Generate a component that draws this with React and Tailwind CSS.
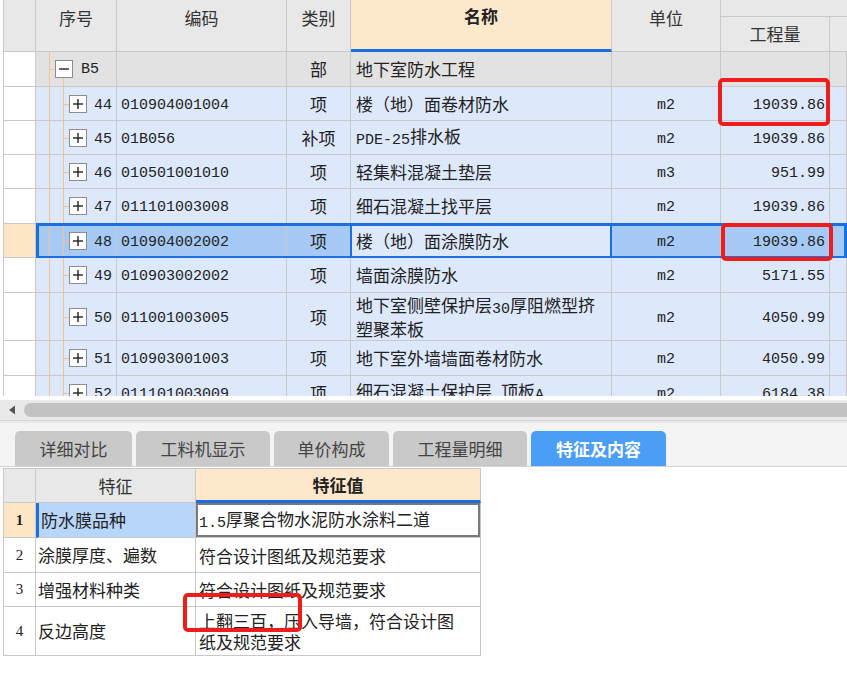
import React from "react";

const CJK = { fontFamily: "'Noto Sans CJK SC', 'Noto Sans', sans-serif" };

function mix(str) {
  const parts = str.match(/[\x20-\x7e]+|[^\x20-\x7e]+/g) || [];
  return parts.map((p, i) =>
    /^[\x20-\x7e]+$/.test(p) ? (
      <span key={i} className="font-['Liberation_Mono',monospace] text-[15px] relative top-[1px]">
        {p}
      </span>
    ) : (
      <span key={i}>{p}</span>
    )
  );
}

function Box({ minus }) {
  return (
    <svg width="18" height="18" viewBox="0 0 18 18" className="block">
      <rect x="0.5" y="0.5" width="17" height="17" fill="#fff" stroke="#8c8c8c" />
      <line x1="4" y1="9" x2="14" y2="9" stroke="#222" strokeWidth="1.4" />
      {!minus && <line x1="9" y1="4" x2="9" y2="14" stroke="#222" strokeWidth="1.4" />}
    </svg>
  );
}

const rows = [
  { n: "44", code: "010904001004", type: "项", name: ["楼（地）面卷材防水"], unit: "m2", qty: "19039.86", h: 34 },
  { n: "45", code: "01B056", type: "补项", name: ["PDE-25排水板"], unit: "m2", qty: "19039.86", h: 34 },
  { n: "46", code: "010501001010", type: "项", name: ["轻集料混凝土垫层"], unit: "m3", qty: "951.99", h: 34 },
  { n: "47", code: "011101003008", type: "项", name: ["细石混凝土找平层"], unit: "m2", qty: "19039.86", h: 35 },
  { n: "48", code: "010904002002", type: "项", name: ["楼（地）面涂膜防水"], unit: "m2", qty: "19039.86", h: 34, sel: true },
  { n: "49", code: "010903002002", type: "项", name: ["墙面涂膜防水"], unit: "m2", qty: "5171.55", h: 35 },
  { n: "50", code: "011001003005", type: "项", name: ["地下室侧壁保护层30厚阻燃型挤", "塑聚苯板"], unit: "m2", qty: "4050.99", h: 48 },
  { n: "51", code: "010903001003", type: "项", name: ["地下室外墙墙面卷材防水"], unit: "m2", qty: "4050.99", h: 35 },
  { n: "52", code: "011101003009", type: "项", name: ["细石混凝土保护层 顶板A"], unit: "m2", qty: "6184.38", h: 35 },
];

const cell = "border-r border-b border-[#c9c9c9] flex items-center";
const mono = "font-['Liberation_Mono',monospace] text-[15px] leading-[18px] relative top-[2px]";

function DataRow({ r }) {
  const bg = r.sel ? "bg-[#a6caf5]" : "bg-[#dde8fb]";
  return (
    <div className="relative flex shrink-0" style={{ height: r.h }}>
      <div className={`${cell} w-[32px] ${r.sel ? "bg-[#fde6c6]" : "bg-white"}`} />
      <div className={`${cell} relative w-[81px] ${bg} justify-end pr-[4px]`}>
        <div className="absolute left-[13px] top-0 bottom-[-1px] w-px bg-[#f2c48c]" />
        <div className="absolute left-[27px] top-0 bottom-[-1px] w-px bg-[#f2c48c]" />
        <div className="absolute left-[27px] top-1/2 w-[6px] h-px bg-[#f2c48c]" />
        <div className="absolute left-[33px] top-1/2 -translate-y-1/2">
          <Box />
        </div>
        <span className={`${mono} text-[#222]`}>{r.n}</span>
      </div>
      <div className={`${cell} w-[170px] ${bg} pl-[4px]`}>
        <span className={`${mono} text-[#222]`}>{r.code}</span>
      </div>
      <div className={`${cell} w-[64px] ${bg} justify-center text-[17px] text-[#222]`}>{r.type}</div>
      <div className={`${cell} relative w-[261px] ${r.sel ? "bg-[#dde8fb]" : bg} pl-[5px] text-[17px] leading-[20px] text-[#222]`}>
        <div>
          {r.name.map((l, i) => (
            <div key={i}>{mix(l)}</div>
          ))}
        </div>
        {r.sel && <div className="absolute left-[-1px] top-0 right-[-1px] bottom-[-1px] border-2 border-[#1b6fe0]" />}
      </div>
      <div className={`${cell} w-[109px] ${bg} justify-center`}>
        <span className={`${mono} text-[#222]`}>{r.unit}</span>
      </div>
      <div className={`${cell} w-[109px] ${bg} justify-end pr-[4px]`}>
        <span className={`${mono} text-[#222]`}>{r.qty}</span>
      </div>
      <div className={`${cell} flex-1 ${bg}`} />
      {r.sel && (
        <div className="absolute left-[32px] right-0 top-[-1px] bottom-[-1px] border-[3px] border-[#1b6fe0] pointer-events-none" />
      )}
    </div>
  );
}

const tabs = [
  { t: "详细对比", w: 117 },
  { t: "工料机显示", w: 134 },
  { t: "单价构成", w: 115 },
  { t: "工程量明细", w: 134 },
  { t: "特征及内容", w: 135, active: true },
];

const feats = [
  { n: "1", k: "防水膜品种", v: ["1.5厚聚合物水泥防水涂料二道"], h: 35, sel: true },
  { n: "2", k: "涂膜厚度、遍数", v: ["符合设计图纸及规范要求"], h: 35 },
  { n: "3", k: "增强材料种类", v: ["符合设计图纸及规范要求"], h: 34 },
  { n: "4", k: "反边高度", v: ["上翻三百，压入导墙，符合设计图", "纸及规范要求"], h: 49 },
];

const bcell = "border-r border-b border-[#c9c9c9] flex items-center";

export default function App() {
  return (
    <div className="relative w-[847px] h-[687px] overflow-hidden bg-white text-[#222]" style={CJK}>
      {/* top grid */}
      <div className="h-[396px] overflow-hidden pl-[3px]">
        <div className="flex flex-col border-l border-[#c9c9c9]">
          {/* header */}
          <div className="flex h-[52px] shrink-0 text-[17px] text-[#333]">
            <div className="border-r border-b border-[#c9c9c9] w-[32px] bg-[#e8e8e8]" />
            <div className="border-r border-b border-[#c9c9c9] w-[81px] bg-[#e8e8e8] flex justify-center pt-[6px] leading-[24px]">序号</div>
            <div className="border-r border-b border-[#c9c9c9] w-[170px] bg-[#e8e8e8] flex justify-center pt-[6px] leading-[24px]">编码</div>
            <div className="border-r border-b border-[#c9c9c9] w-[64px] bg-[#e8e8e8] flex justify-center pt-[6px] leading-[24px]">类别</div>
            <div className="border-r border-[#c9c9c9] border-b-[3px] border-b-[#1b6fe0] w-[261px] bg-[#fde8cb] flex justify-center pt-[4px] leading-[24px] font-bold text-[#222]">名称</div>
            <div className="border-r border-b border-[#c9c9c9] w-[109px] bg-[#e8e8e8] flex justify-center pt-[6px] leading-[24px]">单位</div>
            <div className="flex-1 flex flex-col bg-[#e8e8e8]">
              <div className="h-[17px] border-b border-[#c9c9c9]" />
              <div className="flex flex-1">
                <div className="w-[109px] border-r border-b border-[#c9c9c9] flex items-center justify-center">工程量</div>
                <div className="flex-1 border-b border-[#c9c9c9]" />
              </div>
            </div>
          </div>
          {/* B5 row */}
          <div className="flex h-[35px] shrink-0 text-[17px]">
            <div className={`${cell} w-[32px] bg-white`} />
            <div className={`${cell} relative w-[81px] bg-[#e2e2e2]`}>
              <div className="absolute left-[13px] top-0 bottom-[-1px] w-px bg-[#f2c48c]" />
              <div className="absolute left-[27px] top-[26px] bottom-[-1px] w-px bg-[#f2c48c]" />
              <div className="absolute left-[13px] top-1/2 w-[6px] h-px bg-[#f2c48c]" />
              <div className="absolute left-[19px] top-1/2 -translate-y-1/2">
                <Box minus />
              </div>
              <span className="absolute left-[45px] top-[9px] font-['Liberation_Mono',monospace] text-[15px] leading-[18px]">B5</span>
            </div>
            <div className={`${cell} w-[170px] bg-[#e2e2e2]`} />
            <div className={`${cell} w-[64px] bg-[#e2e2e2] justify-center`}>部</div>
            <div className={`${cell} w-[261px] bg-[#e2e2e2] pl-[5px]`}>地下室防水工程</div>
            <div className={`${cell} w-[109px] bg-[#e2e2e2]`} />
            <div className={`${cell} w-[109px] bg-[#e2e2e2]`} />
            <div className={`${cell} flex-1 bg-[#e2e2e2]`} />
          </div>
          {rows.map((r) => (
            <DataRow key={r.n} r={r} />
          ))}
        </div>
      </div>

      {/* scrollbar */}
      <div className="mt-[4px] h-[20px] bg-[#e9e9e9] flex items-center">
        <svg width="24" height="20" viewBox="0 0 24 20" className="shrink-0">
          <path d="M9 10 L15 5.5 L15 14.5 Z" fill="#555" />
        </svg>
        <div className="flex-1 h-[14px] bg-[#c2c2c2] rounded-l-full" />
      </div>
      <div className="h-px bg-[#d6d6d6]" />
      <div className="h-[2px] bg-[#eaeaea]" />

      {/* tabs */}
      <div className="h-[44px] bg-[#f4f4f4] border-b border-[#d4d4d4] flex items-end pl-[15px] gap-[4px]">
        {tabs.map((t) => (
          <div
            key={t.t}
            className={`h-[35px] rounded-t-[5px] flex items-center justify-center text-[17px] ${
              t.active ? "bg-[#4b9ef5] text-white font-bold" : "bg-[#c9c9c9] text-[#444]"
            }`}
            style={{ width: t.w }}
          >
            {t.t}
          </div>
        ))}
      </div>

      {/* features table */}
      <div className="pl-[3px] pt-[1px]">
        <div className="w-[478px] border-l border-t border-[#c9c9c9] flex flex-col text-[17px]">
          <div className="flex h-[34px]">
            <div className={`${bcell} w-[32px] bg-[#e8e8e8]`} />
            <div className={`${bcell} w-[160px] bg-[#e8e8e8] justify-center text-[#333]`}>特征</div>
            <div className="border-r border-[#c9c9c9] border-b-[3px] border-b-[#1b6fe0] flex-1 bg-[#fde8cb] flex items-center justify-center font-bold">特征值</div>
          </div>
          {feats.map((f) => (
            <div key={f.n} className="flex" style={{ height: f.h }}>
              <div
                className={`${bcell} w-[32px] justify-center font-['Liberation_Serif',serif] text-[15px] ${
                  f.sel ? "bg-[#fde6c6] font-bold" : "bg-white"
                }`}
              >
                {f.n}
              </div>
              <div
                className={`${bcell} w-[160px] pl-[2px] ${
                  f.sel ? "bg-[#b8d6fa] border-l-[3px] border-l-[#1b6fe0] pl-0" : "bg-white"
                }`}
              >
                {f.k}
              </div>
              <div className={`${bcell} flex-1 bg-white pl-[3px] leading-[21px] relative`}>
                <div>
                  {f.v.map((l, i) => (
                    <div key={i}>{mix(l)}</div>
                  ))}
                </div>
                {f.sel && <div className="absolute inset-0 border-2 border-[#7a7a7a]" />}
              </div>
            </div>
          ))}
        </div>
      </div>

      {/* red annotation boxes */}
      <div className="absolute left-[718px] top-[78px] w-[112px] h-[48px] border-[4px] border-[#ef1c1c] rounded-[5px]" />
      <div className="absolute left-[721px] top-[223px] w-[112px] h-[38px] border-[4px] border-[#ef1c1c] rounded-[5px]" />
      <div className="absolute left-[183px] top-[593px] w-[119px] h-[39px] border-[4px] border-[#ef1c1c] rounded-[5px]" />
    </div>
  );
}
